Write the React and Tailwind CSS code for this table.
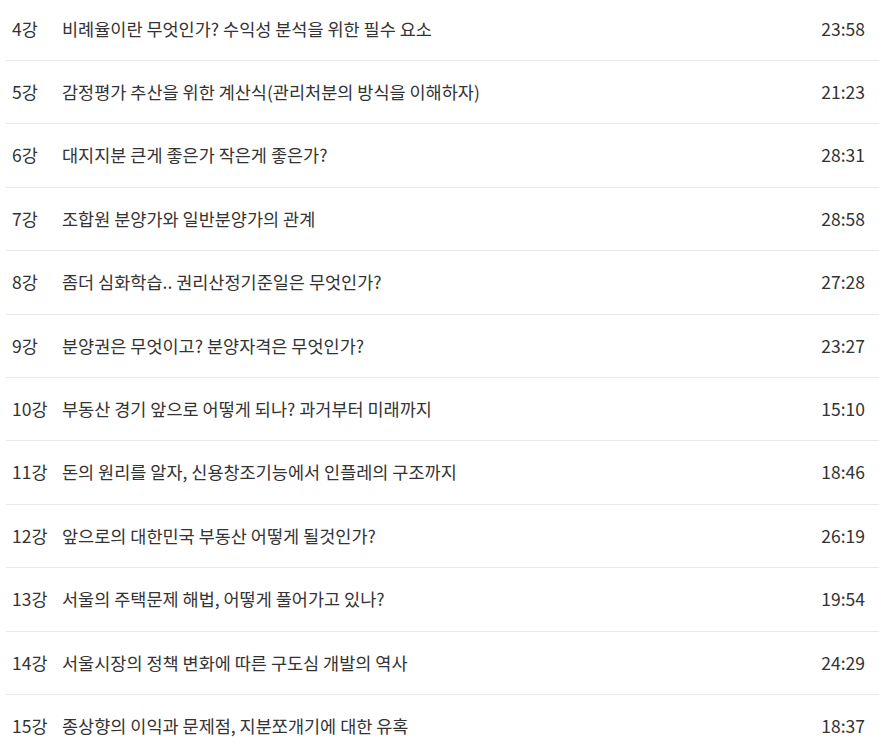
const rows = [
  ["4강", "비례율이란 무엇인가? 수익성 분석을 위한 필수 요소", "23:58"],
  ["5강", "감정평가 추산을 위한 계산식(관리처분의 방식을 이해하자)", "21:23"],
  ["6강", "대지지분 큰게 좋은가 작은게 좋은가?", "28:31"],
  ["7강", "조합원 분양가와 일반분양가의 관계", "28:58"],
  ["8강", "좀더 심화학습.. 권리산정기준일은 무엇인가?", "27:28"],
  ["9강", "분양권은 무엇이고? 분양자격은 무엇인가?", "23:27"],
  ["10강", "부동산 경기 앞으로 어떻게 되나? 과거부터 미래까지", "15:10"],
  ["11강", "돈의 원리를 알자, 신용창조기능에서 인플레의 구조까지", "18:46"],
  ["12강", "앞으로의 대한민국 부동산 어떻게 될것인가?", "26:19"],
  ["13강", "서울의 주택문제 해법, 어떻게 풀어가고 있나?", "19:54"],
  ["14강", "서울시장의 정책 변화에 따른 구도심 개발의 역사", "24:29"],
  ["15강", "종상향의 이익과 문제점, 지분쪼개기에 대한 유혹", "18:37"],
];

export default function App() {
  return (
    <div
      className="w-[879px] h-[753px] overflow-hidden bg-white text-[#333] text-[17.5px]"
      style={{ fontFamily: '"Noto Sans CJK KR", "Noto Sans", sans-serif' }}
    >
      <div className="pl-[6px] -mt-[2.4px]">
        {rows.map(([n, t, d]) => (
          <div
            key={n}
            className="flex items-center h-[63.4px] border-b border-[#e8e8e8] pl-[6px] pr-[14px]"
          >
            <span className="w-[50px] shrink-0">{n}</span>
            <span className="flex-1">{t}</span>
            <span>{d}</span>
          </div>
        ))}
      </div>
    </div>
  );
}
